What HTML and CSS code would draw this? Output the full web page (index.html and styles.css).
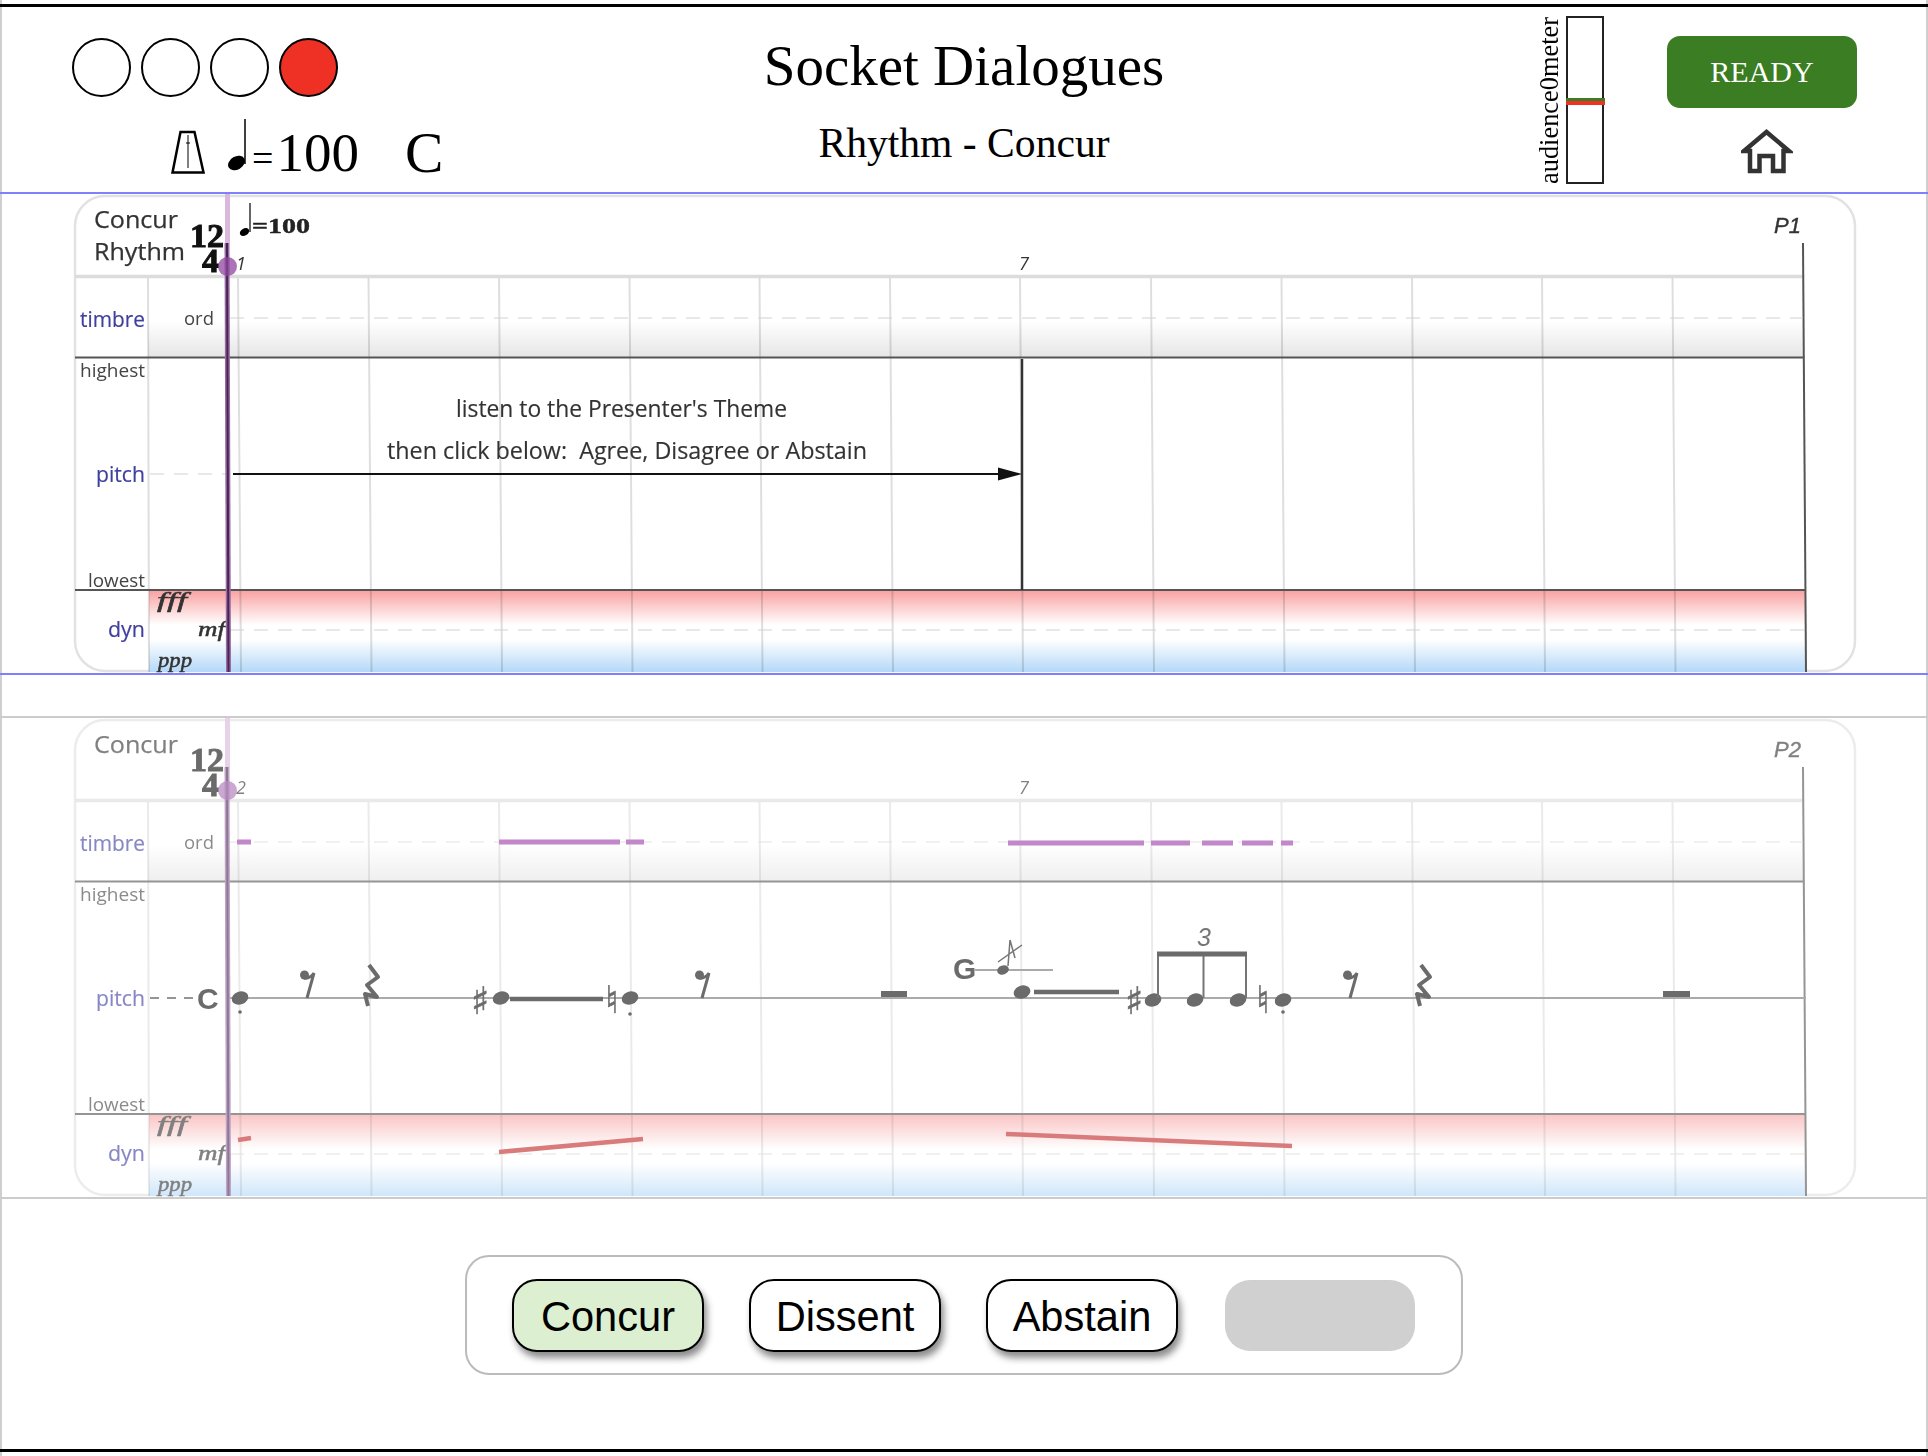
FILE: index.html
```html
<!DOCTYPE html>
<html lang="en">
<head>
<meta charset="utf-8">
<title>Socket Dialogues</title>
<link rel="stylesheet" href="styles.css">
</head>
<body>
<div class="app">
  <header class="header">
    <div class="left">
      <div class="lights">
        <span class="light"></span><span class="light"></span><span class="light"></span><span class="light light-on"></span>
      </div>
      <div class="tempo">
        <svg class="metronome" viewBox="0 0 34 44" width="34" height="44"><path class="metro-body" d="M9.500 2H23.500L32.500 42.500H1.500Z"/><path class="metro-needle" d="M17 5V38M15 13H19"/></svg>
        <svg class="tempo-note" viewBox="0 0 24 54" width="24" height="54"><path class="note-stem" d="M20 1V46"/><ellipse class="note-head" cx="11.500" cy="45" rx="9" ry="6.500" transform="rotate(-30 11.500 45)"/></svg>
        <span class="bpm"><span class="eq">=</span>100</span>
        <span class="key">C</span>
      </div>
    </div>
    <div class="titles">
      <h1 class="title">Socket Dialogues</h1>
      <h2 class="subtitle">Rhythm - Concur</h2>
    </div>
    <div class="right">
      <div class="meter-label">audience0meter</div>
      <div class="meter"><div class="meter-fill"><span class="meter-green"></span><span class="meter-red"></span></div></div>
      <div class="actions">
        <button class="ready">READY</button>
        <svg class="home" viewBox="0 0 52 46" width="52" height="46"><path d="M3 23L25.500 4L48 23H42.500V43H32V28H18.500V43H9V23Z"/></svg>
      </div>
    </div>
  </header>

  <section class="score-wrap live">
    <svg class="score" viewBox="0 194 1928 479" width="1928" height="479">
      <defs>
        <linearGradient id="tg1" x1="0" y1="0" x2="0" y2="1"><stop offset=".55" stop-color="#fff"/><stop offset="1" stop-color="#e6e6e6"/></linearGradient>
        <linearGradient id="dg1" x1="0" y1="0" x2="0" y2="1"><stop offset="0" stop-color="#f9a3a3"/><stop offset=".42" stop-color="#fff"/><stop offset=".6" stop-color="#fff"/><stop offset="1" stop-color="#b3d8f8"/></linearGradient>
      </defs>
      <rect class="frame" x="75" y="196" width="1780" height="475" rx="30"/>
      <rect x="148" y="277" width="1655" height="80" fill="url(#tg1)"/>
      <rect x="149" y="591" width="1657" height="81" fill="url(#dg1)"/>
      <g class="bars">
        <path d="M148 277L149 672"/>
        <path d="M238 277L241 672M368.500 277L371.500 672M499 277L502 672M629.500 277L632.500 672M759.500 277L762.500 672M890 277L893 672M1020 277L1023 672M1151 277L1154 672M1281.500 277L1284.500 672M1412 277L1415 672M1542 277L1545 672M1672.500 277L1675.500 672"/>
      </g>
      <path class="rule-light" d="M75 276.500H1803"/>
      <path class="rule" d="M75 357.500H1804M75 590H1806"/>
      <path class="rule" d="M1803 243L1806 672"/>
      <path class="dash" d="M230 318H1803M150 474H226M230 630H1806"/>
      <text class="t-title" x="94" y="228" textLength="84" lengthAdjust="spacingAndGlyphs">Concur</text>
      <text class="t-title" x="94" y="260" textLength="91" lengthAdjust="spacingAndGlyphs">Rhythm</text>
      <text class="t-time" x="190" y="247">12</text>
      <text class="t-time" x="202" y="272">4</text>
      <path class="note-stem thin" d="M250 203V232"/>
      <ellipse class="note-head" cx="244.500" cy="232" rx="5" ry="3.500" transform="rotate(-30 244.500 232)"/>
      <text class="t-tempo" x="252" y="233" textLength="58" lengthAdjust="spacingAndGlyphs">=100</text>
      <text class="t-bar" x="236" y="270">1</text>
      <text class="t-bar" x="1019" y="270">7</text>
      <text class="t-part" x="1774" y="233">P1</text>
      <text class="t-cat" x="80" y="327" textLength="65" lengthAdjust="spacingAndGlyphs">timbre</text>
      <text class="t-ord" x="184" y="325" textLength="30" lengthAdjust="spacingAndGlyphs">ord</text>
      <text class="t-ord" x="80" y="377" textLength="65" lengthAdjust="spacingAndGlyphs">highest</text>
      <text class="t-cat" x="96" y="482" textLength="49" lengthAdjust="spacingAndGlyphs">pitch</text>
      <text class="t-ord" x="88" y="587" textLength="57" lengthAdjust="spacingAndGlyphs">lowest</text>
      <text class="t-cat" x="108" y="637" textLength="37" lengthAdjust="spacingAndGlyphs">dyn</text>
      <text class="t-dyn" x="157" y="607" textLength="30" lengthAdjust="spacingAndGlyphs">fff</text>
      <text class="t-dyn" x="198" y="636" textLength="27" lengthAdjust="spacingAndGlyphs">mf</text>
      <text class="t-dyn" x="158" y="667" textLength="34" lengthAdjust="spacingAndGlyphs">ppp</text>
      <text class="t-note" x="456" y="417" textLength="331" lengthAdjust="spacingAndGlyphs">listen to the Presenter's Theme</text>
      <text class="t-note" x="387" y="459" textLength="480" lengthAdjust="spacingAndGlyphs" xml:space="preserve">then click below:  Agree, Disagree or Abstain</text>
      <path class="barline-strong" d="M1022 359V590"/>
      <path class="arrow-line" d="M233 474H1005"/>
      <path class="arrow-head" d="M998 467.500L1022 474L998 480.500Z"/>
      <path class="play-light" d="M227.500 194V243"/>
      <path class="play-wide" d="M227 243L228.500 672"/>
      <path class="play-core" d="M227 243L228.500 672"/>
      <circle class="play-ball" cx="227.500" cy="266.500" r="9.500"/>
    </svg>
  </section>

  <section class="score-wrap other">
    <svg class="score faded" viewBox="0 194 1928 479" width="1928" height="479">
      <defs>
        <linearGradient id="tg2" x1="0" y1="0" x2="0" y2="1"><stop offset=".55" stop-color="#fff"/><stop offset="1" stop-color="#e6e6e6"/></linearGradient>
        <linearGradient id="dg2" x1="0" y1="0" x2="0" y2="1"><stop offset="0" stop-color="#f9a3a3"/><stop offset=".42" stop-color="#fff"/><stop offset=".6" stop-color="#fff"/><stop offset="1" stop-color="#b3d8f8"/></linearGradient>
      </defs>
      <rect class="frame" x="75" y="196" width="1780" height="475" rx="30"/>
      <rect x="148" y="277" width="1655" height="80" fill="url(#tg2)"/>
      <rect x="149" y="591" width="1657" height="81" fill="url(#dg2)"/>
      <g class="bars">
        <path d="M148 277L149 672"/>
        <path d="M238 277L241 672M368.500 277L371.500 672M499 277L502 672M629.500 277L632.500 672M759.500 277L762.500 672M890 277L893 672M1020 277L1023 672M1151 277L1154 672M1281.500 277L1284.500 672M1412 277L1415 672M1542 277L1545 672M1672.500 277L1675.500 672"/>
      </g>
      <path class="rule-light" d="M75 276.500H1803"/>
      <path class="rule" d="M75 357.500H1804M75 590H1806"/>
      <path class="rule" d="M1803 243L1806 672"/>
      <path class="dash" d="M230 318H1803M230 630H1806"/>
      <text class="t-title" x="94" y="229" textLength="84" lengthAdjust="spacingAndGlyphs">Concur</text>
      <text class="t-time" x="190" y="247">12</text>
      <text class="t-time" x="202" y="272">4</text>
      <text class="t-bar" x="236" y="270">2</text>
      <text class="t-bar" x="1019" y="270">7</text>
      <text class="t-part" x="1774" y="233">P2</text>
      <text class="t-cat" x="80" y="327" textLength="65" lengthAdjust="spacingAndGlyphs">timbre</text>
      <text class="t-ord" x="184" y="325" textLength="30" lengthAdjust="spacingAndGlyphs">ord</text>
      <text class="t-ord" x="80" y="377" textLength="65" lengthAdjust="spacingAndGlyphs">highest</text>
      <text class="t-cat" x="96" y="482" textLength="49" lengthAdjust="spacingAndGlyphs">pitch</text>
      <text class="t-ord" x="88" y="587" textLength="57" lengthAdjust="spacingAndGlyphs">lowest</text>
      <text class="t-cat" x="108" y="637" textLength="37" lengthAdjust="spacingAndGlyphs">dyn</text>
      <text class="t-dyn" x="157" y="607" textLength="30" lengthAdjust="spacingAndGlyphs">fff</text>
      <text class="t-dyn" x="198" y="636" textLength="27" lengthAdjust="spacingAndGlyphs">mf</text>
      <text class="t-dyn" x="158" y="667" textLength="34" lengthAdjust="spacingAndGlyphs">ppp</text>
      <g transform="translate(0 -524)">
        <path class="timbre-mark" d="M237 842H251M499 842H620M626 842H644M1008 843H1144M1151 843H1190M1202 843H1233M1242 843H1273M1281 843H1293"/>
        <path class="dyn-mark" d="M238 1140L251 1138M499 1152L643 1139M1006 1134L1292 1146"/>
        <path class="dash dark" d="M150 998H195"/>
        <path class="staff" d="M230 998H1806M975 970H1053"/>
        <text class="t-pitch" x="197" y="1009">C</text>
        <text class="t-pitch" x="953" y="979">G</text>
        <g class="heads">
          <ellipse cx="240" cy="998" rx="8.500" ry="6.500" transform="rotate(-20 240 998)"/>
          <ellipse cx="501" cy="998" rx="8.500" ry="6.500" transform="rotate(-20 501 998)"/>
          <ellipse cx="630" cy="998" rx="8.500" ry="6.500" transform="rotate(-20 630 998)"/>
          <ellipse cx="1003" cy="970" rx="6" ry="4.500" transform="rotate(-20 1003 970)"/>
          <ellipse cx="1022" cy="992" rx="8.500" ry="6.500" transform="rotate(-20 1022 992)"/>
          <ellipse cx="1153" cy="1000" rx="8.500" ry="6.500" transform="rotate(-20 1153 1000)"/>
          <ellipse cx="1195" cy="1000" rx="8.500" ry="6.500" transform="rotate(-20 1195 1000)"/>
          <ellipse cx="1238" cy="1000" rx="8.500" ry="6.500" transform="rotate(-20 1238 1000)"/>
          <ellipse cx="1283" cy="1000" rx="8.500" ry="6.500" transform="rotate(-20 1283 1000)"/>
          <circle cx="240" cy="1012" r="1.800"/>
          <circle cx="630" cy="1014" r="1.800"/>
          <circle cx="1283" cy="1012" r="1.800"/>
          <rect x="881" y="991" width="26" height="6"/>
          <rect x="1663" y="991" width="27" height="6"/>
        </g>
        <path class="sustain" d="M510 999H603M1034 992H1119"/>
        <path class="stem" d="M1158 954V998M1203.500 954V998M1246 954V998"/>
        <path class="beam" d="M1157 954H1247"/>
        <path class="grace" d="M1008 966L1010 940M1010 940L1015 958M998 962L1022 945"/>
        <text class="t-tuplet" x="1197" y="946">3</text>
        <text class="t-acc" x="480" y="1014">♯</text>
        <text class="t-acc" x="612" y="1013">♮</text>
        <text class="t-acc" x="1134" y="1014">♯</text>
        <text class="t-acc" x="1263" y="1013">♮</text>
        <g class="rests">
          <g transform="translate(308 0)"><circle cx="-3.500" cy="975" r="4.500"/><path d="M-4 978Q2 979 6 973L-1 998"/></g>
          <g transform="translate(703 0)"><circle cx="-3.500" cy="975" r="4.500"/><path d="M-4 978Q2 979 6 973L-1 998"/></g>
          <g transform="translate(1351 0)"><circle cx="-3.500" cy="975" r="4.500"/><path d="M-4 978Q2 979 6 973L-1 998"/></g>
          <path class="rest-q" transform="translate(369 0)" d="M0 965L9 977L-2 985L8 997L-4 994L-1 1006"/>
          <path class="rest-q" transform="translate(1421 0)" d="M0 965L9 977L-2 985L8 997L-4 994L-1 1006"/>
        </g>
      </g>
      <path class="play-light" d="M227.500 194V243"/>
      <path class="play-wide" d="M227 243L228.500 672"/>
      <path class="play-core" d="M227 243L228.500 672"/>
      <circle class="play-ball" cx="227.500" cy="266.500" r="9.500"/>
    </svg>
  </section>

  <div class="controls">
    <div class="panel">
      <button class="choice chosen">Concur</button>
      <button class="choice">Dissent</button>
      <button class="choice">Abstain</button>
      <button class="choice blank" disabled></button>
    </div>
  </div>

  <div class="foot"></div>
</div>
</body>
</html>
```

FILE: styles.css
```css
* { box-sizing: border-box; }
html, body { margin: 0; padding: 0; background: #fff; }
body { font-family: "Liberation Serif", serif; color: #000; overflow: hidden; }

.app {
  width: 1928px;
  height: 1456px;
  padding-top: 4px;
  display: flex;
  flex-direction: column;
  box-shadow: inset 2px 0 #cfcfcf, inset -2px 0 #cfcfcf;
}

/* header */
.header {
  height: 188px;
  flex: none;
  border-top: 3px solid #000;
  display: grid;
  grid-template-columns: 1fr auto 1fr;
}
.left { padding: 31px 0 0 72px; }
.lights { display: flex; gap: 10px; }
.light {
  width: 59px;
  height: 59px;
  border: 2px solid #000;
  border-radius: 50%;
  background: #fff;
}
.light-on { background: #ee3124; }
.tempo {
  display: flex;
  align-items: flex-end;
  height: 54px;
  margin: 23px 0 0 99px;
}
.metro-body { fill: none; stroke: #000; stroke-width: 2.500; }
.metro-needle { fill: none; stroke: #000; stroke-width: 1; }
.tempo-note { margin: 0 0 2px 20px; }
.note-stem { fill: none; stroke: #000; stroke-width: 1.500; }
.note-stem.thin { stroke-width: 1.200; }
.note-head { fill: #000; }
.bpm, .key { line-height: 58px; }
.bpm { font-size: 55px; margin: 0 0 -13px 3px; }
.eq { font-size: 38px; margin-right: 3px; }
.key { font-size: 57.600px; margin: 0 0 -8px 46px; }

.titles { text-align: center; width: 420px; padding-top: 27px; }
.title { margin: 0; font-size: 57px; font-weight: 400; line-height: 64px; }
.subtitle { margin: 20.500px 0 0; font-size: 41.600px; font-weight: 400; line-height: 48px; }

.right { display: flex; justify-content: flex-end; padding-right: 71px; }
.meter-label {
  writing-mode: vertical-rl;
  transform: rotate(180deg);
  font-size: 26.400px;
  line-height: 24px;
  width: 24px;
  height: 168px;
  margin: 9px 3px 0 0;
  text-align: left;
}
.meter {
  width: 38px;
  height: 168px;
  margin: 9px 0 0 2px;
  border: 2.500px solid #222;
  padding-top: 80px;
}
.meter-fill { display: flex; flex-direction: column; margin: 0 -2.500px; }
.meter-green { height: 3px; background: #3a7d23; }
.meter-red { height: 4px; background: #ee3124; }
.actions {
  width: 190px;
  margin-left: 63px;
  display: flex;
  flex-direction: column;
  align-items: center;
  padding-top: 29px;
}
.ready {
  width: 190px;
  height: 72px;
  border: 0;
  border-radius: 13px;
  background: #3a7d23;
  color: #fff;
  font-family: "Liberation Serif", serif;
  font-size: 30px;
  padding: 0;
}
.home { margin: 20px 0 0 10px; display: block; }
.home path { fill: none; stroke: #333; stroke-width: 4.500; }

/* scores */
.score-wrap { flex: none; line-height: 0; }
.score-wrap.live { border-top: 2px solid #8080ff; border-bottom: 2px solid #8080ff; }
.score-wrap.other { margin-top: 41px; border-top: 2px solid #cccccc; border-bottom: 2px solid #cccccc; }
.score { display: block; filter: blur(0.6px); }
.faded { opacity: 0.62; }
.frame { fill: #fff; stroke: #e2e2e2; stroke-width: 2.500; }
.bars path { fill: none; stroke: #000; stroke-opacity: .13; stroke-width: 2; }
.rule-light { fill: none; stroke: #dcdcdc; stroke-width: 3.500; }
.rule { fill: none; stroke: #555; stroke-width: 2; }
.dash { fill: none; stroke: #d2d2d2; stroke-width: 1.200; stroke-dasharray: 14 10; }
.dash.dark { stroke: #555; stroke-dasharray: 9 8; stroke-width: 2; }
.barline-strong { fill: none; stroke: #333; stroke-width: 2.500; }
.arrow-line { fill: none; stroke: #111; stroke-width: 2; }
.arrow-head { fill: #111; }
.play-light { fill: none; stroke: #d9b8dc; stroke-width: 5; }
.play-wide { fill: none; stroke: #9a6aa6; stroke-width: 5; }
.play-core { fill: none; stroke: #45264f; stroke-width: 2; }
.play-ball { fill: #8d459e; fill-opacity: .75; }

.t-title, .t-ord, .t-cat, .t-note, .t-bar { font-family: "Open Sans", sans-serif; }
.t-title { font-size: 24px; fill: #333; stroke: #333; stroke-width: .25; }
.t-time { font-family: "Liberation Serif", serif; font-weight: 700; font-size: 34px; fill: #111; stroke: #111; stroke-width: 1; }
.t-tempo { font-family: "Liberation Serif", serif; font-weight: 700; font-size: 21px; fill: #222; stroke: #222; stroke-width: .4; }
.t-bar { font-size: 18px; font-style: italic; fill: #333; }
.t-part { font-family: "Liberation Sans", sans-serif; font-style: italic; font-size: 22px; fill: #333; stroke: #333; stroke-width: .4; }
.t-cat { font-size: 22px; fill: #3f3fa0; stroke: #3f3fa0; stroke-width: .2; }
.t-ord { font-size: 19px; fill: #444; }
.t-dyn { font-family: "Liberation Serif", serif; font-style: italic; font-size: 21px; fill: #333; stroke: #333; stroke-width: .5; }
.t-note { font-size: 23px; fill: #333; stroke: #333; stroke-width: .15; }
.t-pitch { font-family: "Liberation Sans", sans-serif; font-weight: 700; font-size: 30px; fill: #111; }
.t-tuplet { font-family: "Liberation Sans", sans-serif; font-style: italic; font-size: 25px; fill: #222; }
.t-acc { font-family: "DejaVu Sans", sans-serif; font-size: 38px; fill: #111; stroke: #111; stroke-width: .6; text-anchor: middle; }

.timbre-mark { fill: none; stroke: #9c3fa8; stroke-width: 5; }
.dyn-mark { fill: none; stroke: #c22b2b; stroke-width: 4.500; }
.staff { fill: none; stroke: #777; stroke-width: 1.800; }
.heads { fill: #111; }
.sustain { fill: none; stroke: #111; stroke-width: 4.500; }
.stem { fill: none; stroke: #222; stroke-width: 2; }
.beam { fill: none; stroke: #111; stroke-width: 5; }
.grace { fill: none; stroke: #222; stroke-width: 1.500; }
.rests { fill: #111; }
.rests path { fill: none; stroke: #111; stroke-width: 3; }
.rests .rest-q { stroke-width: 4; stroke-linejoin: round; }

/* controls */
.controls { display: flex; justify-content: center; margin-top: 56px; }
.panel {
  display: flex;
  gap: 45px;
  padding: 22px 46px 21px 45px;
  border: 2px solid #bbb;
  border-radius: 24px;
}
.choice {
  width: 192px;
  height: 73px;
  border: 2px solid #000;
  border-radius: 25px;
  background: #fff;
  font-family: "Liberation Sans", sans-serif;
  font-size: 41.600px;
  color: #000;
  padding: 2px 0 0;
  box-shadow: 3px 6px 7px rgba(0, 0, 0, .45);
}
.chosen { background: #dcefd0; }
.blank {
  width: 190px;
  height: 71px;
  margin: 1px 0 0 2px;
  background: #d0d0d0;
  border: 0;
  box-shadow: none;
}

.foot { margin-top: auto; margin-bottom: 4px; border-top: 3px solid #000; }
```
